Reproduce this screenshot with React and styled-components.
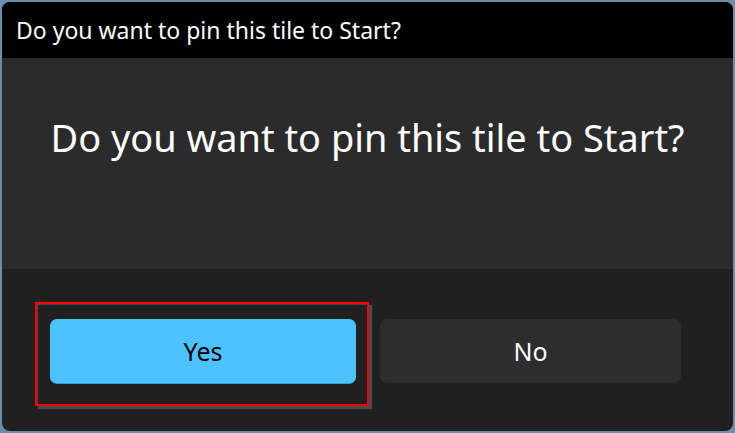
import React from "react";
import styled, { createGlobalStyle } from "styled-components";

const Global = createGlobalStyle`
  html, body {
    margin: 0;
    padding: 0;
    background: #6d8dac;
  }
  body {
    font-family: "Noto Sans", "Liberation Sans", sans-serif;
  }
`;

const Page = styled.div`
  width: 735px;
  height: 433px;
  padding: 2px;
  box-sizing: border-box;
`;

const Window = styled.div`
  height: 100%;
  border-radius: 8px;
  overflow: hidden;
  display: flex;
  flex-direction: column;
  background: #202020;
`;

const TitleBar = styled.div`
  height: 56px;
  background: #000;
  color: #fff;
  display: flex;
  align-items: center;
  padding: 0 14px;
  font-size: 23px;
`;

const Body = styled.div`
  height: 211px;
  background: #2b2b2b;
  display: flex;
  align-items: center;
  justify-content: center;
  padding-bottom: 54px;
  box-sizing: border-box;
  color: #fff;
  font-size: 37.9px;
`;

const Footer = styled.div`
  flex: 1;
  display: grid;
  grid-template-columns: 306px 301px;
  column-gap: 24px;
  padding: 50px 0 0 48px;
  align-items: start;
`;

const Focus = styled.div`
  margin: -17px -13px 0 -15px;
  padding: 15px 11px 21px 13px;
  border: 2px solid #ff0000;
  box-shadow: 3px 3px 1px #4a4a4a, inset 1px 1px 1px #4a4a4a;
`;

const Button = styled.button`
  width: 100%;
  height: 64px;
  border: none;
  border-radius: 7px;
  font-family: inherit;
  font-size: 25px;
  background: ${(p) => (p.primary ? "#4cc2ff" : "#2d2d2d")};
  color: ${(p) => (p.primary ? "#000" : "#fff")};
  box-shadow: ${(p) => (p.primary ? "0 1px 0 #3a9bd0" : "none")};
`;

export default function App() {
  return (
    <Page>
      <Global />
      <Window>
        <TitleBar>Do you want to pin this tile to Start?</TitleBar>
        <Body>Do you want to pin this tile to Start?</Body>
        <Footer>
          <Focus>
            <Button primary>Yes</Button>
          </Focus>
          <Button>No</Button>
        </Footer>
      </Window>
    </Page>
  );
}
